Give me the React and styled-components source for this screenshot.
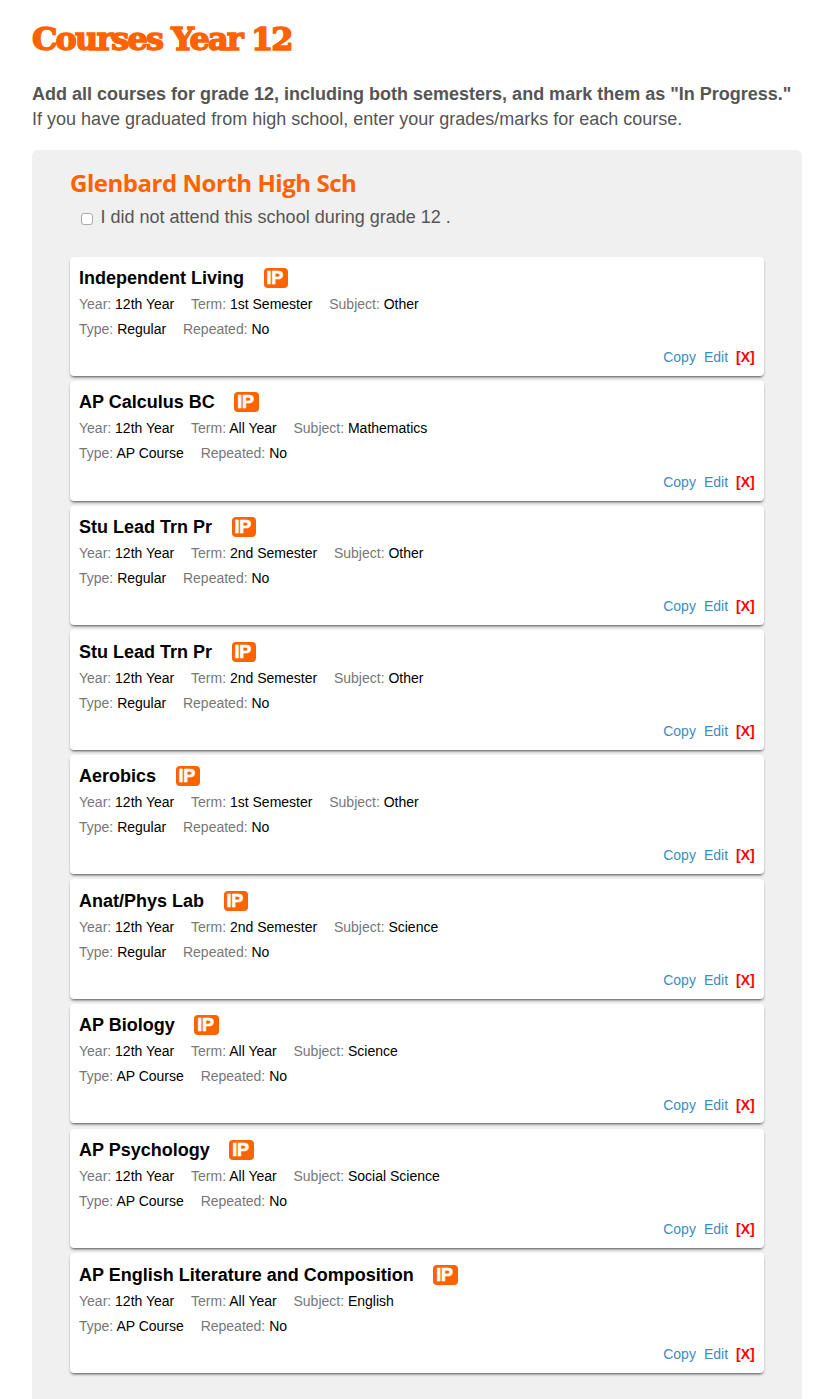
import styled, { createGlobalStyle } from "styled-components";

const GlobalStyle = createGlobalStyle`
  html,
  body {
    margin: 0;
    background-color: #fff;
  }

  body {
    height: 1399px;
    overflow: hidden;
    font-family: "Liberation Sans", Arial, sans-serif;
    color: #555;
  }
`;

const Page = styled.main`
  box-sizing: border-box;
  height: 1399px;
  padding: 19px 34px 0 32px;
  display: flex;
  flex-direction: column;
`;

const Title = styled.h1`
  margin: 0;
  height: 63px;
  font-family: "DejaVu Serif", serif;
  font-size: 32px;
  font-weight: bold;
  line-height: 40px;
  letter-spacing: -1.9px;
  white-space: nowrap;
  color: #ff6200;
  -webkit-text-stroke: 1.5px #ff6200;
`;

const Intro = styled.p`
  margin: 0;
  height: 68px;
  font-size: 18px;
  line-height: 25px;
  white-space: nowrap;
`;

const School = styled.section`
  flex: 1;
  padding: 18px 38px 0;
  background-color: #f0f0f0;
  border-radius: 6px 6px 0 0;
`;

const SchoolName = styled.h2`
  margin: 0;
  font-family: "Open Sans", sans-serif;
  font-size: 24px;
  font-weight: bold;
  line-height: 30px;
  letter-spacing: -0.46px;
  white-space: nowrap;
  color: #ff6200;
`;

const NotAttended = styled.label`
  display: flex;
  align-items: center;
  gap: 7.5px;
  height: 38px;
  margin-bottom: 20.6px;
  padding-left: 11px;
  font-size: 18px;
`;

const Checkbox = styled.input`
  appearance: none;
  box-sizing: border-box;
  width: 12px;
  height: 12px;
  margin: 3px 0 0;
  border: 1px solid #aaa;
  border-radius: 3px;
  background-color: #fff;
`;

const CourseList = styled.div`
  display: flex;
  flex-direction: column;
  gap: 5.2px;
`;

const Card = styled.article`
  box-sizing: border-box;
  height: 119.4px;
  padding: 9.3px 9px 0;
  background-color: #fff;
  border-radius: 4px;
  box-shadow: 0 2px 3px -1px rgba(0, 0, 0, 0.7);
`;

const CourseTitle = styled.h3`
  display: flex;
  align-items: center;
  gap: 19.5px;
  height: 25px;
  margin: 0;
  font-size: 18px;
  font-weight: bold;
  color: #000;
`;

const Badge = styled.span`
  box-sizing: border-box;
  height: 20px;
  margin-top: -1px;
  padding: 0 5px 0 3px;
  border-radius: 4px;
  background-color: #ff6200;
  color: #fff;
  line-height: 20px;
  letter-spacing: -0.2px;
  -webkit-text-stroke: 0.6px #fff;
`;

const Details = styled.div`
  display: flex;
  gap: 16.8px;
  height: 25px;
  font-size: 14px;
  line-height: 27px;
  color: #000;
`;

const Label = styled.span`
  color: #777;
`;

const Actions = styled.div`
  display: flex;
  justify-content: flex-end;
  gap: 8px;
  padding: 3.2px 0.3px 0 0;
  font-size: 14px;
  line-height: 26px;
`;

const Action = styled.a`
  color: ${(props) => (props.$remove ? "#f00" : "#3c8dbc")};
  font-weight: ${(props) => (props.$remove ? "bold" : "normal")};
  cursor: pointer;
`;

const courses = [
  { name: "Independent Living", term: "1st Semester", subject: "Other", type: "Regular" },
  { name: "AP Calculus BC", term: "All Year", subject: "Mathematics", type: "AP Course" },
  { name: "Stu Lead Trn Pr", term: "2nd Semester", subject: "Other", type: "Regular" },
  { name: "Stu Lead Trn Pr", term: "2nd Semester", subject: "Other", type: "Regular" },
  { name: "Aerobics", term: "1st Semester", subject: "Other", type: "Regular" },
  { name: "Anat/Phys Lab", term: "2nd Semester", subject: "Science", type: "Regular" },
  { name: "AP Biology", term: "All Year", subject: "Science", type: "AP Course" },
  { name: "AP Psychology", term: "All Year", subject: "Social Science", type: "AP Course" },
  { name: "AP English Literature and Composition", term: "All Year", subject: "English", type: "AP Course" },
];

const Detail = ({ label, value }) => (
  <span>
    <Label>{label}:</Label> {value}
  </span>
);

const CourseCard = ({ course }) => (
  <Card>
    <CourseTitle>
      {course.name}
      <Badge>IP</Badge>
    </CourseTitle>
    <Details>
      <Detail label="Year" value="12th Year" />
      <Detail label="Term" value={course.term} />
      <Detail label="Subject" value={course.subject} />
    </Details>
    <Details>
      <Detail label="Type" value={course.type} />
      <Detail label="Repeated" value="No" />
    </Details>
    <Actions>
      <Action>Copy</Action>
      <Action>Edit</Action>
      <Action $remove>[X]</Action>
    </Actions>
  </Card>
);

const App = () => {
  return (
    <>
      <GlobalStyle />
      <Page>
        <Title>Courses Year 12</Title>
        <Intro>
          <strong>Add all courses for grade 12, including both semesters, and mark them as "In Progress."</strong>
          <br />
          If you have graduated from high school, enter your grades/marks for each course.
        </Intro>
        <School>
          <SchoolName>Glenbard North High Sch</SchoolName>
          <NotAttended>
            <Checkbox type="checkbox" />
            I did not attend this school during grade 12 .
          </NotAttended>
          <CourseList>
            {courses.map((course, index) => (
              <CourseCard key={index} course={course} />
            ))}
          </CourseList>
        </School>
      </Page>
    </>
  );
};

export default App;
